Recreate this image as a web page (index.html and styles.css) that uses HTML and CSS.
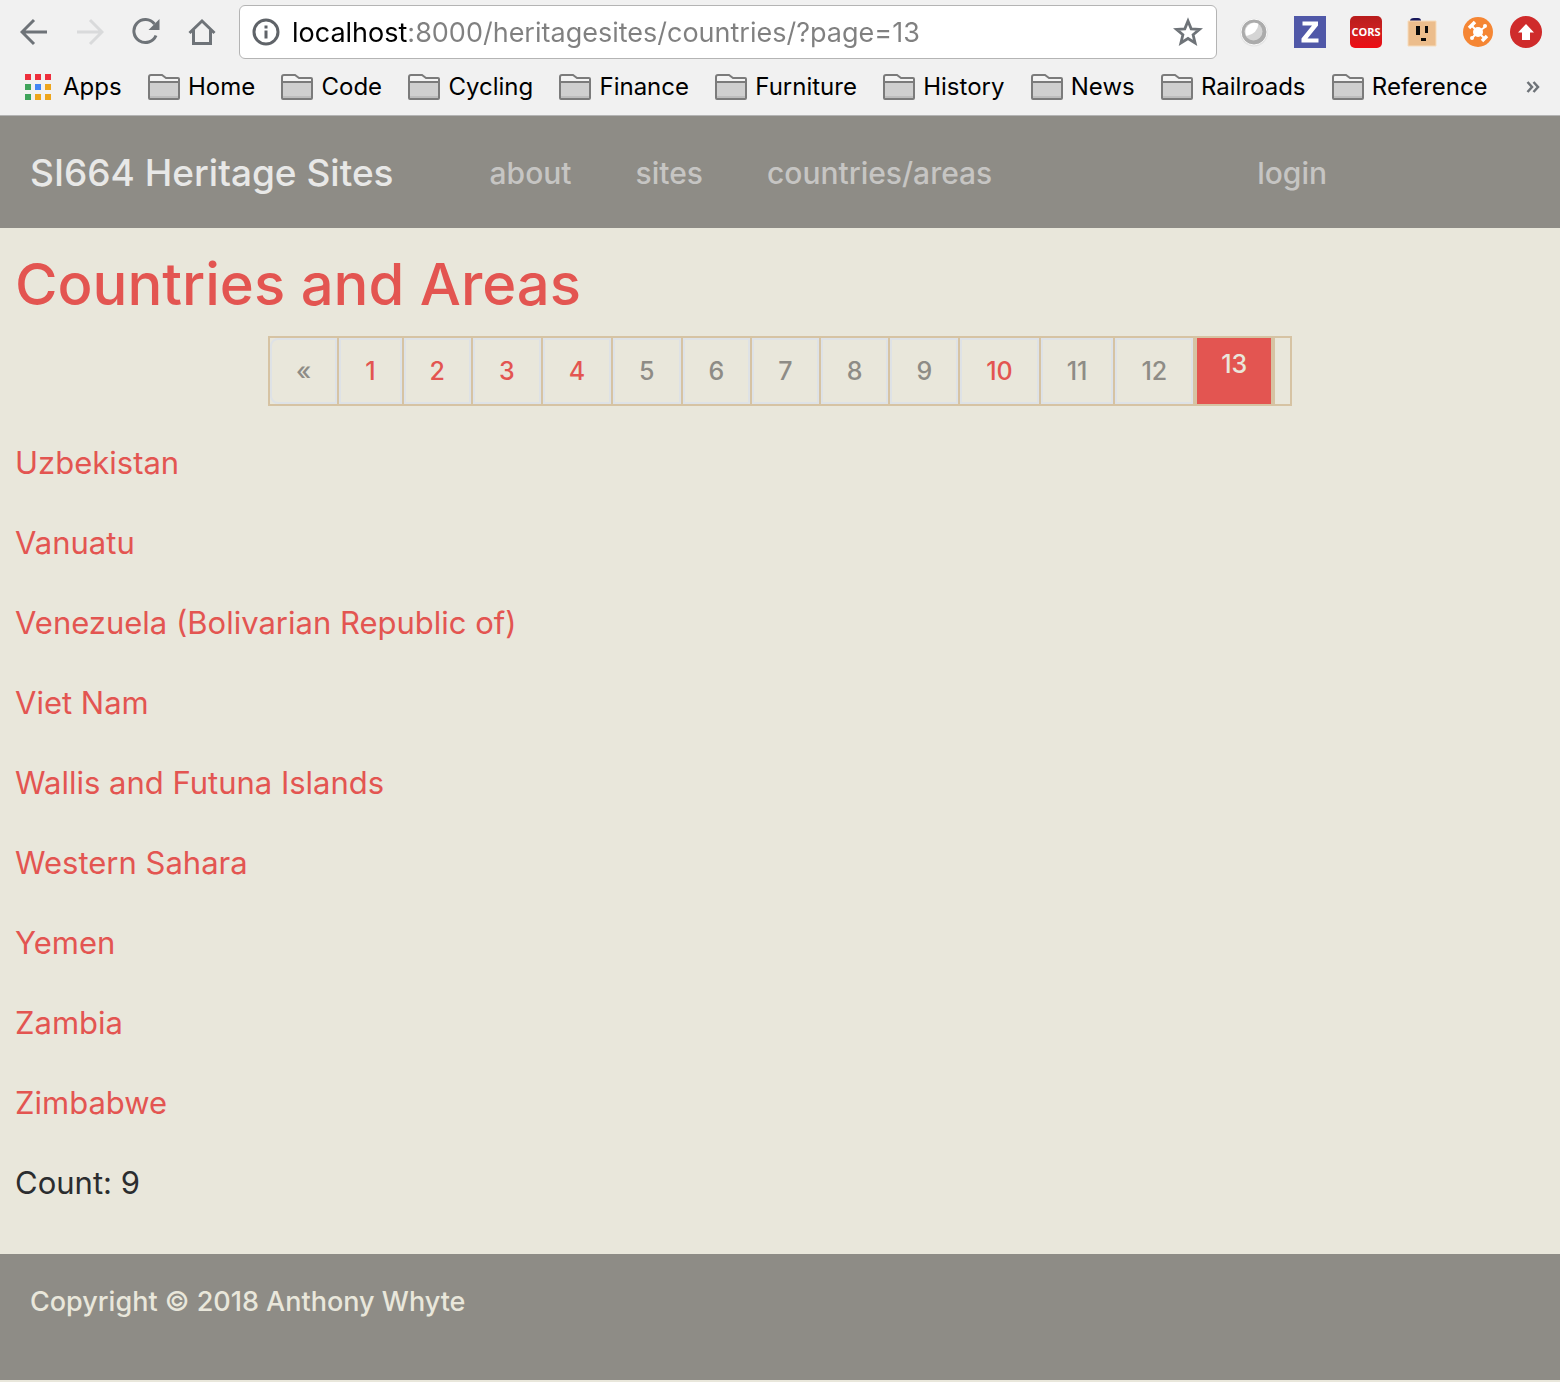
FILE: index.html
```html
<!DOCTYPE html>
<html lang="en">
<head>
<meta charset="utf-8">
<title>SI664 Heritage Sites</title>
<link rel="stylesheet" href="styles.css">
</head>
<body>
<svg class="defs" aria-hidden="true">
  <symbol id="folder" viewBox="0 0 32 26">
    <path d="M1 24V3q0-2 2-2h11l4 3h12q1 0 1 1v19q0 1-1 1H2q-1 0-1-1z" fill="#f4f4f4"/>
    <path d="M1 8h30v16H1z" fill="#cfcfcf"/>
    <path d="M2 22h28v2H2z" fill="#bdbdbd"/>
    <path d="M1 8h30M1 24V3q0-2 2-2h11l4 3h12q1 0 1 1v19q0 1-1 1H2q-1 0-1-1z" fill="none" stroke="#7b7b7b" stroke-width="2"/>
  </symbol>
</svg>

<header class="browser">
  <div class="toolbar">
    <div class="controls">
      <button type="button" aria-label="Back"><svg width="28" height="28" viewBox="0 0 28 28" fill="none" stroke="#6e7378" stroke-width="3"><path d="M27 14H3M14 2 2 14l12 12"/></svg></button>
      <button type="button" aria-label="Forward" disabled><svg width="28" height="28" viewBox="0 0 28 28" fill="none" stroke="#d9dadb" stroke-width="3"><path d="M1 14h24M14 2l12 12-12 12"/></svg></button>
      <button type="button" aria-label="Reload"><svg width="28" height="28" viewBox="0 0 28 28"><path d="M24 17.500A11.500 11.500 0 1 1 22.500 6" fill="none" stroke="#6e7378" stroke-width="3"/><path d="M27.500 1v11h-11z" fill="#6e7378"/></svg></button>
      <button type="button" aria-label="Home page"><svg width="28" height="28" viewBox="0 0 28 28" fill="none" stroke="#6e7378" stroke-width="3"><path d="M1.500 15 14 3l12.500 12M5.500 12v13.500h17V12"/></svg></button>
    </div>
    <div class="address">
      <svg width="28" height="28" viewBox="0 0 28 28"><circle cx="14" cy="14" r="12" fill="none" stroke="#5f6368" stroke-width="3"/><path d="M12.500 7.500h3v3h-3zM12.500 12.500h3v8h-3z" fill="#5f6368"/></svg>
      <input class="url" type="text" aria-label="Address" value="localhost:8000/heritagesites/countries/?page=13">
      <button type="button" aria-label="Bookmark this page"><svg width="30" height="30" viewBox="0 0 30 30" fill="none" stroke="#6e7378" stroke-width="2.800"><path d="M15 4l3.200 7.800 8.300.6-6.400 5.400 2 8.200-7.100-4.500L7.900 26l2-8.200-6.400-5.400 8.300-.6z"/></svg></button>
    </div>
    <div class="extensions">
      <button type="button" aria-label="Status orb"><svg width="32" height="32" viewBox="0 0 32 32"><circle cx="16" cy="16.500" r="14" fill="#e4e4e4"/><circle cx="16" cy="16" r="13" fill="#ababab" stroke="#fbfbfb"/><circle cx="15.500" cy="15.500" r="9" fill="#d5d5d5"/><path d="M8.500 20a9 9 0 0 1 12-12.200q-1 10-12 12.200z" fill="#fff"/></svg></button>
      <button type="button" aria-label="Zotero"><svg width="32" height="32" viewBox="0 0 32 32"><path fill="#5058a8" d="M0 0h32v32H0z"/><path d="M8.500 5.500h15.500v4L13.500 22.500H24.500v4H7.500v-4L18 9.500H8.500z" fill="#fff"/></svg></button>
      <button type="button" class="cors" aria-label="CORS">CORS</button>
      <button type="button" aria-label="Box face"><svg width="32" height="32" viewBox="0 0 32 32"><path d="M4 5q0-3 4-3h4q3 0 3 3z" fill="#18185c"/><path fill="#ecbd8c" stroke="#f7dcbc" d="M2 5h28v25H2z"/><path d="M10 10h4v9h-4zM19 10h3v7h-3zM15 22h5v3h-5z" fill="#0b0b0b"/></svg></button>
      <button type="button" aria-label="Network"><svg width="32" height="32" viewBox="0 0 32 32"><circle cx="16" cy="16" r="15" fill="#f58634"/><path d="M16 16 9 9M16 16l7-5M16 16l6 6M16 16l-6 6" stroke="#fff" stroke-width="2"/><circle cx="16" cy="16" r="5" fill="#fff"/><path d="M7 12l6-6M20 25l5-5" stroke="#fff" stroke-width="3.500"/><circle cx="23" cy="10" r="2" fill="#fff"/><circle cx="10" cy="22" r="2" fill="#fff"/></svg></button>
      <button type="button" class="update" aria-label="Update"><svg width="32" height="32" viewBox="0 0 32 32"><circle cx="16" cy="16" r="16" fill="#cf2b2b"/><path d="M16 8l8 8.500h-4V24h-8v-7.500H8z" fill="#fff"/></svg></button>
    </div>
  </div>
  <nav class="bookmarks" aria-label="Bookmarks">
    <a class="apps" href="#"><svg width="26" height="26" viewBox="0 0 26 26"><path d="M0 0h6v6H0zM10 0h6v6h-6zM20 0h6v6h-6z" fill="#ee2f3c"/><path d="M0 10h6v6H0zM0 20h6v6H0z" fill="#3fa35a"/><path d="M10 10h6v6h-6z" fill="#4285f4"/><path d="M20 10h6v6h-6zM10 20h6v6h-6zM20 20h6v6h-6z" fill="#eea51c"/></svg>Apps</a>
    <a href="#"><svg width="32" height="26"><use href="#folder"/></svg>Home</a>
    <a href="#"><svg width="32" height="26"><use href="#folder"/></svg>Code</a>
    <a href="#"><svg width="32" height="26"><use href="#folder"/></svg>Cycling</a>
    <a href="#"><svg width="32" height="26"><use href="#folder"/></svg>Finance</a>
    <a href="#"><svg width="32" height="26"><use href="#folder"/></svg>Furniture</a>
    <a href="#"><svg width="32" height="26"><use href="#folder"/></svg>History</a>
    <a href="#"><svg width="32" height="26"><use href="#folder"/></svg>News</a>
    <a href="#"><svg width="32" height="26"><use href="#folder"/></svg>Railroads</a>
    <a href="#"><svg width="32" height="26"><use href="#folder"/></svg>Reference</a>
    <button type="button" aria-label="More bookmarks"><svg width="14" height="12" viewBox="0 0 14 12" fill="none" stroke="#6e7378" stroke-width="2.500"><path d="M1.500 1l4.500 5-4.500 5M7.500 1l4.500 5-4.500 5"/></svg></button>
  </nav>
</header>

<nav class="site-nav" aria-label="Site">
  <a class="brand" href="#">SI664 Heritage Sites</a>
  <a href="#">about</a>
  <a href="#">sites</a>
  <a href="#">countries/areas</a>
  <a class="login" href="#">login</a>
</nav>

<main>
  <h1>Countries and Areas</h1>
  <ul class="pagination">
    <li><a class="muted" href="#" aria-label="Previous">«</a></li>
    <li><a href="#">1</a></li>
    <li><a href="#">2</a></li>
    <li><a href="#">3</a></li>
    <li><a href="#">4</a></li>
    <li><a class="muted" href="#">5</a></li>
    <li><a class="muted" href="#">6</a></li>
    <li><a class="muted" href="#">7</a></li>
    <li><a class="muted" href="#">8</a></li>
    <li><a class="muted" href="#">9</a></li>
    <li><a href="#">10</a></li>
    <li><a class="muted" href="#">11</a></li>
    <li><a class="muted" href="#">12</a></li>
    <li class="current" aria-current="page">13</li>
  </ul>
  <p><a href="#">Uzbekistan</a></p>
  <p><a href="#">Vanuatu</a></p>
  <p><a href="#">Venezuela (Bolivarian Republic of)</a></p>
  <p><a href="#">Viet Nam</a></p>
  <p><a href="#">Wallis and Futuna Islands</a></p>
  <p><a href="#">Western Sahara</a></p>
  <p><a href="#">Yemen</a></p>
  <p><a href="#">Zambia</a></p>
  <p><a href="#">Zimbabwe</a></p>
  <p>Count: 9</p>
</main>

<footer>Copyright © 2018 Anthony Whyte</footer>
</body>
</html>
```
FILE: styles.css
```css
* { box-sizing: border-box; }

body {
  margin: 0;
  background: #e9e7db;
  color: #2b2d2f;
  font: 31px/48px Inter, "Liberation Sans", sans-serif;
}

a { color: #e35551; text-decoration: none; }

button {
  display: flex;
  padding: 0;
  border: 0;
  background: none;
}

svg { flex: none; display: block; }

.defs { position: absolute; width: 0; height: 0; }

/* Browser window */
.browser {
  background: #f1f1f1;
  border-bottom: 1px solid #b4b4b4;
}

.toolbar {
  display: flex;
  align-items: center;
  padding: 5px 18px 0 20px;
}

.controls { display: flex; gap: 28px; }

.address {
  flex: 1;
  display: flex;
  align-items: center;
  height: 54px;
  margin: 0 21px 0 23px;
  padding: 0 13px 0 12px;
  background: #fff;
  border: 1px solid #b4b4b4;
  border-radius: 6px;
}

.url {
  flex: 1;
  min-width: 0;
  padding: 2px 0 0 12px;
  border: 0;
  outline: 0;
  font: 27px/40px Inter, "Liberation Sans", sans-serif;
  color: transparent;
  background: linear-gradient(to right, #000 128px, #808080 128px);
  -webkit-background-clip: text;
  background-clip: text;
}

.extensions { display: flex; gap: 24px; }
.extensions .update { margin-left: -8px; }

.cors {
  width: 32px;
  height: 32px;
  align-items: center;
  justify-content: center;
  border-radius: 5px;
  background: linear-gradient(#b81c1c, #cc2020 45%, #ee0c14);
  color: #fff;
  font: bold 11px/32px "Liberation Sans Narrow", "Open Sans", sans-serif;
}

.bookmarks {
  display: flex;
  align-items: center;
  justify-content: space-between;
  height: 56px;
  padding: 0 20px 0 25px;
  font-size: 24px;
}

.bookmarks a {
  display: flex;
  align-items: center;
  gap: 8px;
  color: #000;
}

.bookmarks .apps { gap: 12px; }

.bookmarks button { margin-left: 12px; }

/* Site */
.site-nav {
  display: flex;
  align-items: center;
  gap: 64px;
  height: 112px;
  padding: 2px 233px 0 30px;
  background: #8e8c86;
}

.site-nav a {
  color: #c6c5c3;
  font-size: 30px;
  font-weight: 500;
}

.site-nav .brand {
  margin-right: 32px;
  color: #e8e8e7;
  font-size: 37px;
}

.site-nav .login { margin-left: auto; }

main { padding: 18px 15px 47px; }

h1 {
  margin: 0 0 14px;
  color: #e35551;
  font-size: 58px;
  font-weight: 500;
  line-height: 76px;
}

.pagination {
  display: flex;
  width: 1024px;
  max-width: 100%;
  margin: 0 auto 33px;
  padding: 0;
  border: 2px solid #d6c3a3;
  list-style: none;
  font-size: 25px;
  font-weight: 500;
  line-height: 62px;
}

.pagination li { border-right: 2px solid #d6c3a3; }

.pagination a {
  display: block;
  padding: 0 24px;
  border: 2px solid #dee2e6;
}

.pagination li:first-child a { border-radius: 8px 0 0 8px; }

.pagination .muted { color: #8e8c86; }

.pagination .current {
  padding: 0 24px;
  border: solid #d6c3a3;
  border-width: 0 4px 0 2px;
  background: #e35551;
  color: #e9e7db;
  line-height: 52px;
}

p { margin: 0 0 32px; }
p:last-child { margin: 0; }

footer {
  height: 126px;
  padding: 24px 30px;
  background: #8e8c86;
  color: #e9e7db;
  font-size: 27px;
  font-weight: 500;
}
```
